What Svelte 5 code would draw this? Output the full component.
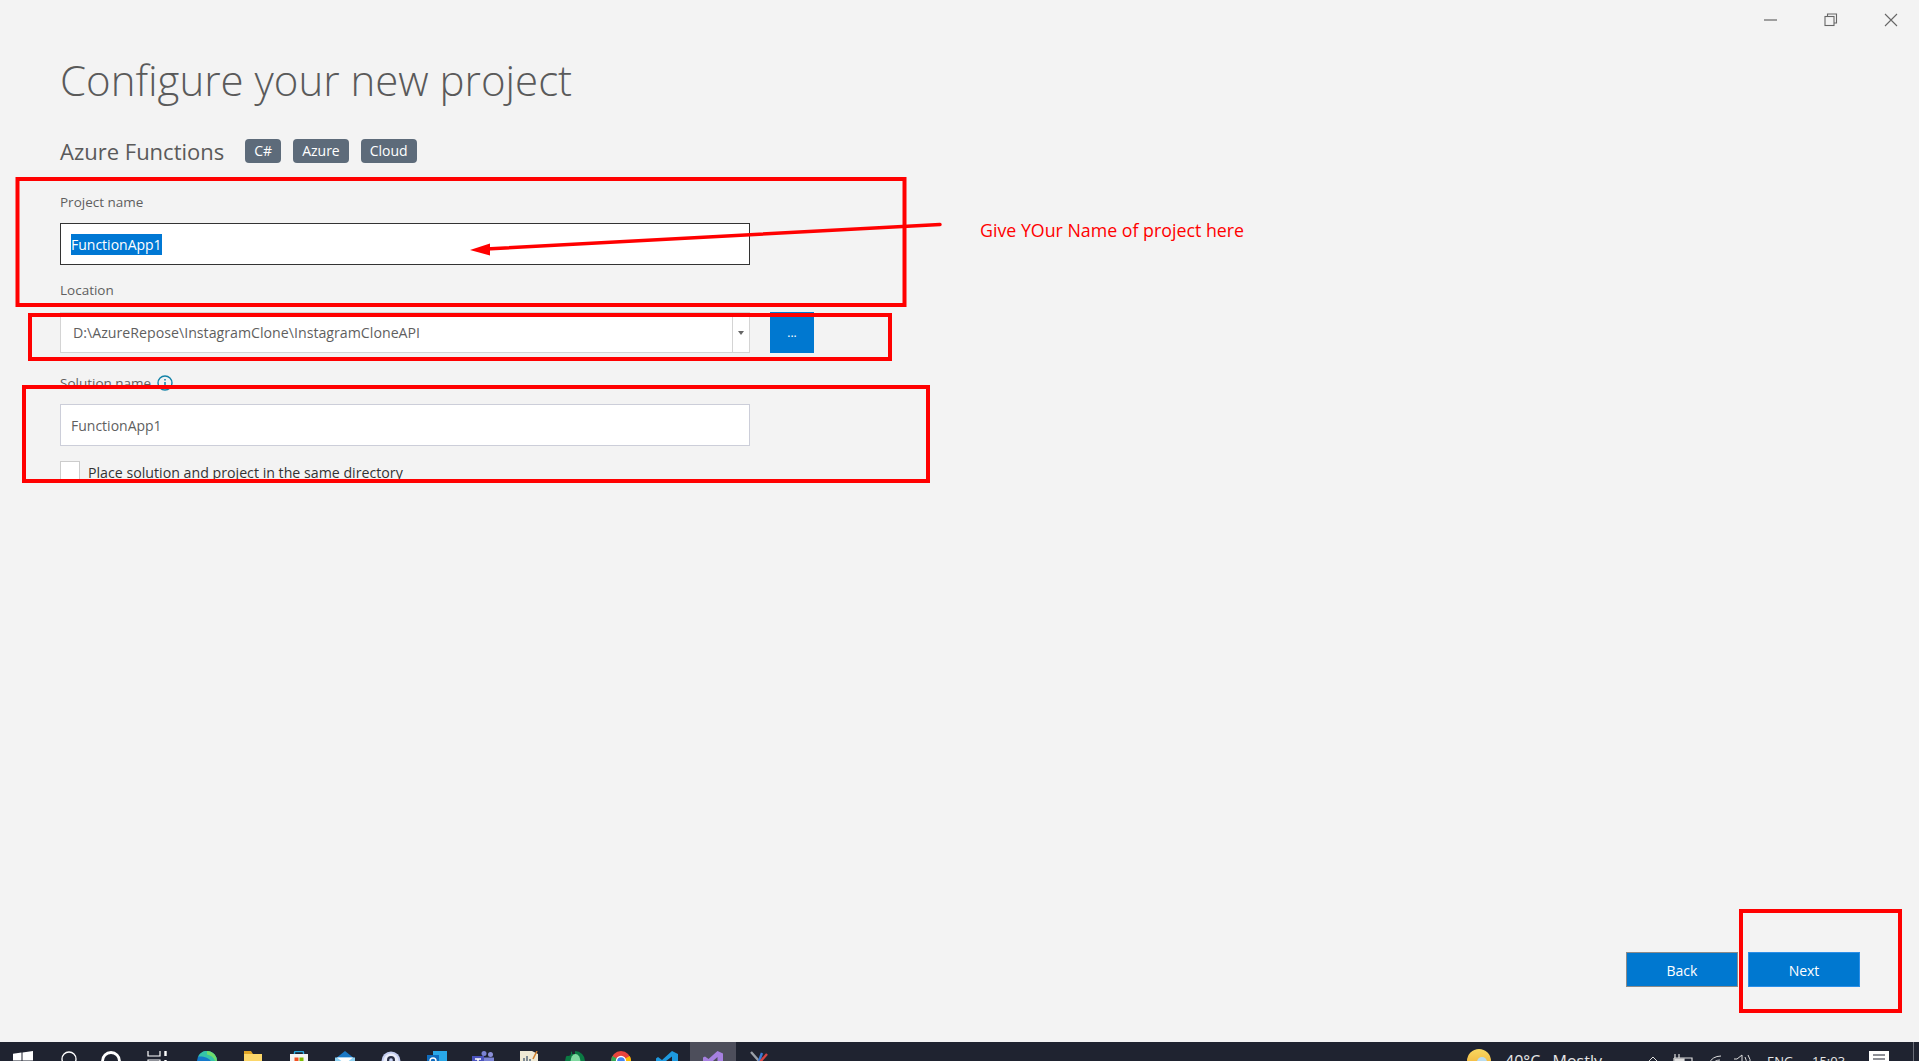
<script>
  const chips = ['C#', 'Azure', 'Cloud'];
  let projectName = 'FunctionApp1';
  let solutionName = 'FunctionApp1';
  let sameDir = false;
</script>

<div class="window">
  <main class="dialog">
    <div class="titlebar">
      <button class="ctl" aria-label="Minimize">
        <svg width="14" height="14" viewBox="0 0 14 14"><path d="M1 7h13" stroke="#666" stroke-width="1.2" /></svg>
      </button>
      <button class="ctl" aria-label="Restore">
        <svg width="14" height="14" viewBox="0 0 14 14" fill="none" stroke="#666" stroke-width="1.1"><rect x="1" y="3.500" width="9" height="9" /><path d="M3.500 3.500V1h9v9H10" /></svg>
      </button>
      <button class="ctl" aria-label="Close">
        <svg width="14" height="14" viewBox="0 0 14 14" fill="none" stroke="#666" stroke-width="1.1"><path d="M1 1l12 12M13 1L1 13" /></svg>
      </button>
    </div>

    <h1>Configure your new project</h1>

    <div class="template">
      <h2>Azure Functions</h2>
      {#each chips as chip}
        <span class="chip">{chip}</span>
      {/each}
    </div>

    <form class="fields">
      <label class="lbl first" for="pname">Project name</label>
      <div class="input focused" id="pname"><span class="sel">{projectName}</span></div>

      <label class="lbl loc" for="ploc">Location</label>
      <div class="location">
        <div class="combo" id="ploc">
          <span class="path">D:\AzureRepose\InstagramClone\InstagramCloneAPI</span>
          <span class="caret"><i></i></span>
        </div>
        <button type="button" class="browse">...</button>
      </div>

      <div class="lbl sol">
        <span>Solution name</span>
        <svg width="16" height="16" viewBox="0 0 16 16" fill="none"><circle cx="8" cy="8" r="7" stroke="#1383a8" stroke-width="1.4" /><path d="M8 7v5M8 4v1.600" stroke="#1383a8" stroke-width="1.5" /></svg>
      </div>
      <div class="input">{solutionName}</div>

      <div class="check">
        <span class="box" class:on={sameDir}></span>
        <span>Place solution and project in the same directory</span>
      </div>
    </form>

    <div class="actions">
      <button type="button" class="btn back">Back</button>
      <button type="button" class="btn next">Next</button>
    </div>

    <!-- annotations drawn on top of the screenshot -->
    <svg class="marks" width="1919" height="1042" viewBox="0 0 1919 1042" fill="none" stroke="#f00" stroke-width="4">
      <rect x="17.500" y="179" width="887" height="126" />
      <rect x="30" y="315" width="860" height="44" />
      <rect x="24" y="387" width="904" height="94" />
      <rect x="1741" y="911" width="159" height="100" />
      <path d="M940 224.500L486 249" stroke-width="3.500" stroke-linecap="round" />
      <path d="M470 250l20-6.500v12z" fill="#f00" stroke="none" />
    </svg>
    <span class="note">Give YOur Name of project here</span>
  </main>

  <footer class="taskbar">
    <div class="slot">
      <svg width="20" height="20" viewBox="0 0 20 20" fill="#fff"><path d="M0 2.800l8.500-1.200V9.500H0zM9.500 1.400L20 0v9.500H9.500zM0 10.500h8.500v7.700L0 17zM9.500 10.500H20V20L9.500 18.400z" /></svg>
    </div>
    <div class="slot">
      <svg width="16" height="20" viewBox="0 0 16 20" fill="none" stroke="#fff" stroke-width="1.300"><circle cx="8" cy="8" r="7" /></svg>
    </div>
    <div class="slot narrow">
      <svg width="20" height="20" viewBox="0 0 20 20" fill="none" stroke="#fff" stroke-width="2.800"><circle cx="10" cy="10" r="8.500" /></svg>
    </div>
    <div class="slot wide">
      <svg width="20" height="20" viewBox="0 0 20 20" fill="none" stroke="#fff" stroke-width="1.200"><path d="M1 0v5h12V0M1 19V9h12v10" /><path d="M18.500 0v5M18.500 9v3" stroke-width="2.400" /></svg>
    </div>
    <div class="slot">
      <svg width="20" height="20" viewBox="0 0 20 20"><circle cx="10" cy="10" r="10" fill="#1479c9" /><path d="M1 5.500A10 10 0 0 1 20 10c0 2.500-2.500 3.500-6 3 1.500-4-4.500-8-13-7.500z" fill="#35c4a8" /><path d="M10 0a10 10 0 0 1 10 10c0 1-.5 1.800-1.200 2.200C18 7 14 4 10 3.500z" fill="#6fdc6a" /></svg>
    </div>
    <div class="slot">
      <svg width="20" height="20" viewBox="0 0 20 20"><path d="M1 0h7l2 3H1z" fill="#e0a526" /><rect x="1" y="3" width="18" height="16" fill="#fcd76a" /></svg>
    </div>
    <div class="slot">
      <svg width="20" height="20" viewBox="0 0 20 20"><path d="M5.500 3V1.500a1 1 0 0 1 1-1h7a1 1 0 0 1 1 1V3" fill="none" stroke="#28a9e0" stroke-width="1.400" /><rect x="1" y="3" width="18" height="16" fill="#f4f4f4" /><rect x="5.500" y="6.500" width="4" height="4" fill="#f25022" /><rect x="10.500" y="6.500" width="4" height="4" fill="#7fba00" /><rect x="5.500" y="11.500" width="4" height="4" fill="#00a4ef" /><rect x="10.500" y="11.500" width="4" height="4" fill="#ffb900" /></svg>
    </div>
    <div class="slot">
      <svg width="20" height="20" viewBox="0 0 20 20"><path d="M0 8L10 0l10 8v11H0z" fill="#1b78c4" /><path d="M0 6.500h20V18H0z" fill="#8fd3f4" /><path d="M2 6.500h16L10 13z" fill="#fff" /></svg>
    </div>
    <div class="slot">
      <svg width="20" height="20" viewBox="0 0 20 20"><circle cx="10" cy="10" r="9.500" fill="#c3cdf0" /><circle cx="10" cy="10" r="7.500" fill="#e9ecf8" /><path d="M6 15V9a4 4 0 0 1 8 0v6z" fill="#2a2f45" /><circle cx="10" cy="9" r="1.800" fill="#c3cdf0" /></svg>
    </div>
    <div class="slot">
      <svg width="20" height="20" viewBox="0 0 20 20"><rect x="6" y="0" width="14" height="16" fill="#29a8e8" /><rect x="0" y="4" width="12" height="14" fill="#0f6cbd" /><circle cx="6" cy="10" r="3" fill="none" stroke="#fff" stroke-width="1.400" /></svg>
    </div>
    <div class="slot">
      <svg width="22" height="20" viewBox="0 0 22 20"><circle cx="18.500" cy="3.500" r="2.500" fill="#8b8fd8" /><circle cx="12" cy="2.500" r="2.500" fill="#7b83d4" /><rect x="8" y="6.500" width="14" height="11" fill="#7b83d4" /><rect x="0" y="5" width="12" height="13" fill="#4b53bc" /><path d="M3 8h6M6 8v7" stroke="#fff" stroke-width="1.500" /></svg>
    </div>
    <div class="slot">
      <svg width="18" height="20" viewBox="0 0 18 20"><path d="M0 0h12l6 3v17H0z" fill="#efe9d4" /><path d="M4 16V7M7 16V5M10 16V8" stroke="#5a6a7c" stroke-width="1.500" /><path d="M17 0l-4 8" stroke="#d2802c" stroke-width="1.500" /></svg>
    </div>
    <div class="slot">
      <svg width="20" height="20" viewBox="0 0 20 20"><circle cx="10" cy="10" r="10" fill="#0b7a43" /><ellipse cx="10.500" cy="11" rx="5" ry="8" fill="#7fd9a0" /><circle cx="3" cy="2" r="3" fill="#1f2330" /><path d="M7 0h3v3H7z" fill="#1f2330" /></svg>
    </div>
    <div class="slot">
      <svg width="20" height="20" viewBox="0 0 20 20"><circle cx="10" cy="10" r="10" fill="#e8453c" /><path d="M10 10L1.400 5A10 10 0 0 0 10 20z" fill="#34a853" /><path d="M10 10l8.700-5A10 10 0 0 1 10 20z" fill="#fbbc05" /><circle cx="10" cy="10" r="4.500" fill="#4285f4" stroke="#fff" stroke-width="1.300" /></svg>
    </div>
    <div class="slot">
      <svg width="22" height="20" viewBox="0 0 22 20"><path d="M16 0l6 3v14l-6 3L6 11l-4 3-2-1.500v-5L2 6l4 3z" fill="#1e9ae0" /><path d="M16 5.500L10 10l6 4.500z" fill="#1f2330" /></svg>
    </div>
    <div class="slot active">
      <svg width="20" height="20" viewBox="0 0 20 20"><path d="M14.500 0L20 2.500v15L14.500 20 5.500 12 2 14.500 0 13.500v-7L2 5.500 5.500 8zM14.500 6l-4.500 4 4.500 4z" fill="#a680e0" /></svg>
    </div>
    <div class="slot">
      <svg width="20" height="20" viewBox="0 0 20 20" fill="none" stroke-width="2.400"><path d="M2 1l8 9M10 10v9" stroke="#9aa0a8" /><path d="M13 2l-3 8" stroke="#3a7bd5" /><path d="M18 3l-7 8" stroke="#d64545" /></svg>
    </div>

    <div class="tray">
      <svg class="weather" width="24" height="24" viewBox="0 0 24 24">
        <defs><linearGradient id="sun" x1="0" y1="0" x2="0" y2="1"><stop offset="0" stop-color="#f8d860" /><stop offset="1" stop-color="#f0a830" /></linearGradient></defs>
        <circle cx="12" cy="12" r="12" fill="url(#sun)" /><circle cx="15" cy="13" r="5" fill="#b9dcf0" />
      </svg>
      <span class="temp">40°C  Mostly</span>
      <svg class="t chev" width="10" height="6" viewBox="0 0 10 6" fill="none" stroke="#ddd" stroke-width="1"><path d="M.500 5.500L5 1l4.500 4.500" /></svg>
      <svg class="t batt" width="20" height="10" viewBox="0 0 20 10" fill="none" stroke="#ddd" stroke-width="1.200"><path d="M1 4h18v6M1 4v6" /><path d="M2 0v4M6 0v4" /><rect x="2" y="5" width="9" height="5" fill="#ddd" /></svg>
      <svg class="t wifi" width="14" height="10" viewBox="0 0 14 10" fill="none" stroke="#ddd" stroke-width="1"><path d="M.500 9A14 14 0 0 1 13 1M4 10a9 9 0 0 1 8-5" /></svg>
      <svg class="t vol" width="20" height="11" viewBox="0 0 20 11" fill="none" stroke="#ddd" stroke-width="1"><path d="M1 5h3l5-4v10" /><path d="M12 3q2 3 1 8M15 1q3 4 2 10" /></svg>
      <span class="lang">ENG</span>
      <span class="clock">15:03</span>
      <svg class="t notif" width="20" height="14" viewBox="0 0 20 14"><rect width="20" height="14" fill="#fff" /><path d="M4 4h12M4 8h12" stroke="#1f2330" stroke-width="1.200" /></svg>
      <span class="t edge"></span>
    </div>
  </footer>
</div>

<style>
  :global(body) {
    margin: 0;
  }
  .window {
    display: flex;
    flex-direction: column;
    height: 100vh;
    overflow: hidden;
    background: #f3f3f3;
    font-family: "Open Sans", "Noto Sans", sans-serif;
  }
  .dialog {
    position: relative;
    flex: 1;
    display: flex;
    flex-direction: column;
    padding: 0 0 0 60px;
    min-height: 0;
  }
  .titlebar {
    position: absolute;
    top: 13px;
    right: 21px;
    display: flex;
    gap: 46.500px;
  }
  .ctl {
    width: 14px;
    height: 14px;
    padding: 0;
    border: 0;
    background: none;
    display: block;
  }
  .ctl svg {
    display: block;
  }
  h1 {
    margin: 52px 0 0;
    font-size: 42px;
    line-height: 56px;
    font-weight: 300;
    color: #5a5a5a;
  }
  .template {
    display: flex;
    align-items: center;
    gap: 12px;
    margin-top: 31px;
    height: 24px;
  }
  h2 {
    margin: 0 9px 0 0;
    font-size: 22px;
    font-weight: 400;
    color: #5a5a5a;
  }
  .chip {
    height: 24px;
    line-height: 24px;
    padding: 0 9px;
    border-radius: 4px;
    background: #5d6b7a;
    color: #fff;
    font-size: 14px;
  }
  .fields {
    width: 690px;
  }
  .lbl {
    display: flex;
    align-items: center;
    gap: 6px;
    height: 20px;
    font-size: 13.500px;
    color: #5f5f5f;
  }
  .lbl.first {
    margin-top: 29px;
  }
  .lbl.loc {
    margin-top: 15px;
  }
  .lbl.sol {
    margin-top: 20px;
  }
  .input {
    margin-top: 11px;
    box-sizing: border-box;
    height: 42px;
    line-height: 41px;
    padding-left: 10px;
    background: #fff;
    border: 1px solid #ccced9;
    font-size: 14px;
    color: #5f5f5f;
  }
  .input.focused {
    border: 1px solid #333;
    color: #fff;
  }
  .sel {
    display: inline-block;
    background: #0078d4;
    line-height: 21px;
    padding: 0;
  }
  .location {
    display: flex;
    gap: 20px;
    width: 754px;
    margin-top: 12px;
  }
  .combo {
    flex: none;
    box-sizing: border-box;
    width: 690px;
    height: 41px;
    display: flex;
    align-items: center;
    background: #fff;
    border: 1px solid #d4d4d4;
    font-size: 14.200px;
    color: #5f5f5f;
  }
  .path {
    flex: 1;
    padding-left: 12px;
  }
  .caret {
    width: 16px;
    height: 100%;
    border-left: 1px solid #d4d4d4;
    display: flex;
    align-items: center;
    justify-content: center;
  }
  .caret i {
    border: 3.500px solid transparent;
    border-top: 4px solid #666;
    border-bottom: 0;
  }
  .browse {
    width: 44px;
    height: 41px;
    padding: 0;
    border: 0;
    background: #0078d0;
    color: #fff;
    font: 12px "Open Sans", sans-serif;
  }
  .check {
    display: flex;
    align-items: flex-start;
    gap: 8px;
    height: 20px;
    margin-top: 15px;
    font-size: 14.200px;
    line-height: 24px;
    color: #333;
  }
  .box {
    flex: none;
    width: 18px;
    height: 20px;
    border: 1px solid #ccc;
    border-bottom: 0;
    background: #fff;
  }
  .box.on {
    background: #0078d4;
  }
  .actions {
    margin-top: auto;
    margin-bottom: 55px;
    padding-right: 59px;
    display: flex;
    justify-content: flex-end;
    gap: 10px;
  }
  .btn {
    box-sizing: border-box;
    width: 112px;
    height: 35px;
    padding: 1px 0 0;
    background: #0078d0;
    color: #fff;
    font: 14px "Open Sans", sans-serif;
    border: 1px solid #8a8a8a;
  }
  .btn.next {
    border-color: #2b8fe8;
  }
  .marks {
    position: absolute;
    top: 0;
    left: 0;
    pointer-events: none;
  }
  .note {
    position: absolute;
    left: 980px;
    top: 218px;
    font-size: 17.800px;
    line-height: 24px;
    color: #f00;
  }
  .taskbar {
    flex: none;
    display: flex;
    height: 19px;
    overflow: hidden;
    background: #1f2330;
  }
  .slot {
    flex: none;
    box-sizing: border-box;
    width: 46px;
    padding-top: 9px;
    display: flex;
    justify-content: center;
    align-items: flex-start;
  }
  .slot svg {
    flex: none;
  }
  .slot.narrow {
    width: 38px;
  }
  .slot.wide {
    width: 54px;
  }
  .slot.active {
    background: #4d4e5b;
  }
  .tray {
    flex: 1;
    position: relative;
    color: #e6e6e6;
    font-size: 14px;
  }
  .tray .t {
    position: absolute;
  }
  .weather {
    position: absolute;
    left: 685px;
    top: 7px;
  }
  .temp {
    position: absolute;
    left: 723px;
    top: 8px;
    white-space: pre;
    word-spacing: 2px;
    font-size: 16px;
    line-height: 22px;
  }
  .chev { left: 866px; top: 14px; }
  .batt { left: 891px; top: 12px; }
  .wifi { left: 926px; top: 13px; }
  .vol { left: 951px; top: 12px; }
  .lang {
    position: absolute;
    left: 985px;
    top: 10px;
    font-size: 13px;
  }
  .clock {
    position: absolute;
    left: 1030px;
    top: 10px;
    font-size: 13px;
  }
  .notif { left: 1087px; top: 9px; }
  .edge {
    left: 1131px;
    top: 0;
    width: 1px;
    height: 19px;
    background: #6a6d78;
  }
</style>
